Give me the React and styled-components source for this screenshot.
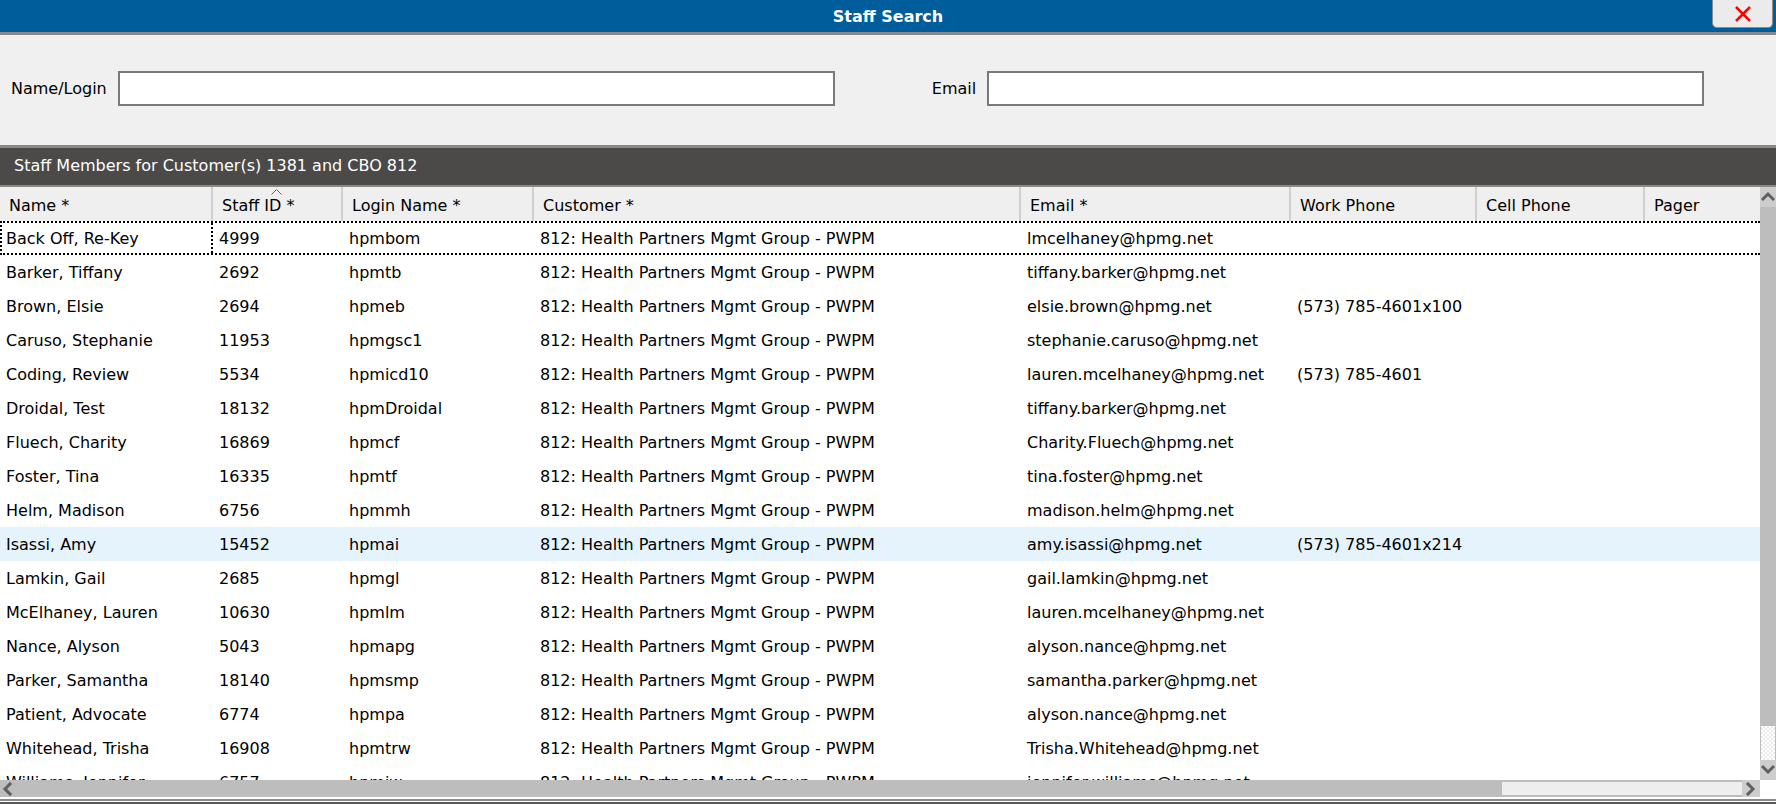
import React from "react";
import styled, { createGlobalStyle } from "styled-components";

const COLORS = {
  titleBlue: "#005d9c",
  rule: "#888888",
  formBg: "#f0f0f0",
  inputBorder: "#7a7a7a",
  sectionBg: "#4b4a48",
  headerBg: "#efefef",
  headerSep: "#cfcfcf",
  highlight: "#e5f3fd",
  scrollThumb: "#bdbdbd",
  scrollButton: "#cdcdcd",
  scrollArrow: "#5f5f5f",
};

const COLUMNS = [
  { key: "name", label: "Name *", width: 213 },
  { key: "id", label: "Staff ID *", width: 130, sorted: true },
  { key: "login", label: "Login Name *", width: 191 },
  { key: "customer", label: "Customer *", width: 487 },
  { key: "email", label: "Email *", width: 270 },
  { key: "work", label: "Work Phone", width: 186 },
  { key: "cell", label: "Cell Phone", width: 168 },
  { key: "pager", label: "Pager", width: 115 },
];

const CUSTOMER = "812: Health Partners Mgmt Group - PWPM";

const STAFF = [
  ["Back Off, Re-Key", "4999", "hpmbom", "lmcelhaney@hpmg.net", ""],
  ["Barker, Tiffany", "2692", "hpmtb", "tiffany.barker@hpmg.net", ""],
  ["Brown, Elsie", "2694", "hpmeb", "elsie.brown@hpmg.net", "(573) 785-4601x100"],
  ["Caruso, Stephanie", "11953", "hpmgsc1", "stephanie.caruso@hpmg.net", ""],
  ["Coding, Review", "5534", "hpmicd10", "lauren.mcelhaney@hpmg.net", "(573) 785-4601"],
  ["Droidal, Test", "18132", "hpmDroidal", "tiffany.barker@hpmg.net", ""],
  ["Fluech, Charity", "16869", "hpmcf", "Charity.Fluech@hpmg.net", ""],
  ["Foster, Tina", "16335", "hpmtf", "tina.foster@hpmg.net", ""],
  ["Helm, Madison", "6756", "hpmmh", "madison.helm@hpmg.net", ""],
  ["Isassi, Amy", "15452", "hpmai", "amy.isassi@hpmg.net", "(573) 785-4601x214"],
  ["Lamkin, Gail", "2685", "hpmgl", "gail.lamkin@hpmg.net", ""],
  ["McElhaney, Lauren", "10630", "hpmlm", "lauren.mcelhaney@hpmg.net", ""],
  ["Nance, Alyson", "5043", "hpmapg", "alyson.nance@hpmg.net", ""],
  ["Parker, Samantha", "18140", "hpmsmp", "samantha.parker@hpmg.net", ""],
  ["Patient, Advocate", "6774", "hpmpa", "alyson.nance@hpmg.net", ""],
  ["Whitehead, Trisha", "16908", "hpmtrw", "Trisha.Whitehead@hpmg.net", ""],
  ["Williams, Jennifer", "6757", "hpmjw", "jennifer.williams@hpmg.net", ""],
];

const FOCUSED_ROW = 0;
const HOVER_ROW = 9;

const GlobalStyle = createGlobalStyle`
  html, body {
    margin: 0;
    padding: 0;
    background: #ffffff;
  }
  body {
    font-family: "DejaVu Sans", "Liberation Sans", sans-serif;
    font-size: 16px;
    color: #000;
  }
  * { box-sizing: border-box; }
`;

const Chevron = ({ dir }) => {
  const points = {
    up: "2,9 7,4 12,9",
    down: "2,4 7,9 12,4",
    left: "9,2 4,7 9,12",
    right: "4,2 9,7 4,12",
  }[dir];
  return (
    <svg width="14" height="14" viewBox="0 0 14 14">
      <polyline
        points={points}
        fill="none"
        stroke={COLORS.scrollArrow}
        strokeWidth="3"
        strokeLinecap="square"
      />
    </svg>
  );
};

const App = () => {
  return (
    <>
      <GlobalStyle />
      <Window>
        <TitleBar>
          <Title>Staff Search</Title>
          <CloseButton aria-label="Close">
            <svg width="18" height="16" viewBox="0 0 18 16">
              <path d="M2 1 L16 15 M16 1 L2 15" stroke="#ff0000" strokeWidth="2.5" />
            </svg>
          </CloseButton>
        </TitleBar>

        <SearchForm>
          <Field>
            <Label>Name/Login</Label>
            <TextInput />
          </Field>
          <Field>
            <Label>Email</Label>
            <TextInput />
          </Field>
        </SearchForm>

        <SectionHeader>Staff Members for Customer(s) 1381 and CBO 812</SectionHeader>

        <Grid>
          <GridMain>
            <Viewport>
              <HeaderRow>
                {COLUMNS.map((col) => (
                  <HeaderCell key={col.key} $width={col.width}>
                    {col.sorted && (
                      <SortMark>
                        <svg width="11" height="6" viewBox="0 0 11 6">
                          <polyline points="0.5,5.5 5.5,0.5 10.5,5.5" fill="none" stroke="#666" />
                        </svg>
                      </SortMark>
                    )}
                    {col.label}
                  </HeaderCell>
                ))}
              </HeaderRow>
              {STAFF.map(([name, id, login, email, work], i) => {
                const values = [name, id, login, CUSTOMER, email, work, "", ""];
                return (
                  <Row key={id} $focused={i === FOCUSED_ROW} $hover={i === HOVER_ROW}>
                    {COLUMNS.map((col, c) => (
                      <Cell
                        key={col.key}
                        $width={col.width}
                        $focused={i === FOCUSED_ROW && c === 0}
                      >
                        {values[c]}
                      </Cell>
                    ))}
                  </Row>
                );
              })}
            </Viewport>
            <VScroll>
              <ScrollButton $v>
                <Chevron dir="up" />
              </ScrollButton>
              <VThumb />
              <CheckerTrack />
              <ScrollButton $v>
                <Chevron dir="down" />
              </ScrollButton>
            </VScroll>
          </GridMain>
          <HScrollRow>
            <HScroll>
              <HThumb>
                <Chevron dir="left" />
              </HThumb>
              <HTrack />
              <ScrollButton>
                <Chevron dir="right" />
              </ScrollButton>
            </HScroll>
            <Corner />
          </HScrollRow>
        </Grid>
        <Footer />
      </Window>
    </>
  );
};

const Window = styled.div`
  width: 1776px;
  height: 804px;
  display: flex;
  flex-direction: column;
  overflow: hidden;
  background: #ffffff;
`;

const TitleBar = styled.div`
  position: relative;
  height: 35px;
  flex-shrink: 0;
  display: flex;
  align-items: center;
  justify-content: center;
  background: ${COLORS.titleBlue};
  border-bottom: 3px solid ${COLORS.rule};
`;

const Title = styled.h1`
  margin: 0;
  font-family: "DejaVu Sans", "Liberation Sans", sans-serif;
  font-size: 16px;
  font-weight: bold;
  color: #ffffff;
`;

const CloseButton = styled.button`
  position: absolute;
  top: 0;
  right: 3px;
  width: 61px;
  height: 28px;
  padding: 0;
  display: flex;
  align-items: center;
  justify-content: center;
  background: #ebebeb;
  border: 1px solid #8a8a8a;
  border-top: none;
  border-radius: 0 0 5px 5px;
`;

const SearchForm = styled.div`
  height: 113px;
  flex-shrink: 0;
  display: flex;
  align-items: center;
  gap: 97px;
  padding: 0 0 3px 11px;
  background: ${COLORS.formBg};
  border-bottom: 3px solid ${COLORS.rule};
`;

const Field = styled.label`
  display: flex;
  align-items: center;
  gap: 11px;
`;

const Label = styled.span`
  font-size: 16px;
  white-space: nowrap;
`;

const TextInput = styled.input`
  width: 717px;
  height: 35px;
  background: #ffffff;
  border: 2px solid ${COLORS.inputBorder};
  outline: none;
`;

const SectionHeader = styled.div`
  height: 39px;
  flex-shrink: 0;
  display: flex;
  align-items: center;
  padding: 0 14px 2px;
  background: ${COLORS.sectionBg};
  border-bottom: 2px solid ${COLORS.rule};
  color: #ffffff;
  font-size: 16px;
`;

const Grid = styled.div`
  flex: 1;
  min-height: 0;
  display: flex;
  flex-direction: column;
`;

const GridMain = styled.div`
  flex: 1;
  min-height: 0;
  display: flex;
`;

const Viewport = styled.div`
  flex: 1;
  min-width: 0;
  overflow: hidden;
`;

const HeaderRow = styled.div`
  display: flex;
  height: 34px;
  background: ${COLORS.headerBg};
`;

const HeaderCell = styled.div`
  position: relative;
  flex: 0 0 ${(p) => p.$width}px;
  display: flex;
  align-items: center;
  padding: 2px 9px 0;
  border-right: 2px solid ${COLORS.headerSep};
  white-space: nowrap;
  &:last-child {
    border-right: none;
  }
`;

const SortMark = styled.span`
  position: absolute;
  top: 2px;
  left: 58px;
  line-height: 0;
`;

const Row = styled.div`
  display: flex;
  height: 34px;
  background: ${(p) => (p.$hover ? COLORS.highlight : "#ffffff")};
  border-top: 2px dotted ${(p) => (p.$focused ? "#000" : "transparent")};
  border-bottom: 2px dotted ${(p) => (p.$focused ? "#000" : "transparent")};
  border-left: 2px dotted ${(p) => (p.$focused ? "#000" : "transparent")};
`;

const Cell = styled.div`
  flex: 0 0 ${(p) => p.$width}px;
  display: flex;
  align-items: center;
  padding: 0 6px;
  white-space: nowrap;
  overflow: hidden;
  border-right: 2px dotted ${(p) => (p.$focused ? "#000" : "transparent")};
  &:first-child {
    flex-basis: ${(p) => p.$width - 2}px;
    padding-left: 4px;
  }
`;

const VScroll = styled.div`
  flex: 0 0 16px;
  display: flex;
  flex-direction: column;
  background: ${COLORS.scrollThumb};
`;

const ScrollButton = styled.div`
  flex: 0 0 ${(p) => (p.$v ? "20px" : "18px")};
  display: flex;
  align-items: center;
  justify-content: center;
  background: ${COLORS.scrollButton};
`;

const VThumb = styled.div`
  flex: 1;
  background: ${COLORS.scrollThumb};
`;

const CheckerTrack = styled.div`
  flex: 0 0 34px;
  margin: 0 1px;
  background-color: #ffffff;
  background-image: repeating-conic-gradient(#ececec 0 25%, #ffffff 0 50%);
  background-size: 4px 4px;
`;

const HScrollRow = styled.div`
  flex: 0 0 17px;
  display: flex;
`;

const HScroll = styled.div`
  flex: 1;
  display: flex;
  background: ${COLORS.scrollThumb};
`;

const HThumb = styled.div`
  flex: 1;
  display: flex;
  align-items: center;
  padding-left: 1px;
`;

const HTrack = styled.div`
  flex: 0 0 240px;
  margin: 2px 0;
  background: #eeeeee;
`;

const Corner = styled.div`
  flex: 0 0 16px;
  background: #ffffff;
`;

const Footer = styled.div`
  flex: 0 0 7px;
  background: #ffffff;
  border-top: 2px solid #ffffff;
  border-bottom: 2px solid #5a5a5a;
  box-shadow: inset 0 2px 0 #8a8a8a;
`;

export default App;
